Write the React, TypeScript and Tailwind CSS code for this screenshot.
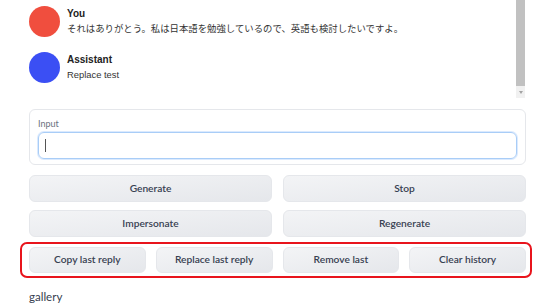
import React from 'react'

const messages = [
  { name: 'You', text: 'それはありがとう。私は日本語を勉強しているので、英語も検討したいですよ。', color: 'bg-[#f04e3e]' },
  { name: 'Assistant', text: 'Replace test', color: 'bg-[#3b4ff4]' },
]

function Btn({ label, small }: { label: string; small?: boolean }) {
  return (
    <button
      className={`flex-1 ${small ? 'h-[26px]' : 'h-[27px]'} rounded-[6px] border border-[#e5e7eb] bg-gradient-to-br from-[#f3f4f6] to-[#e5e7eb] text-[10.2px] font-semibold text-[#374151] [font-family:Lato,'Noto_Sans',sans-serif]`}
    >
      {label}
    </button>
  )
}

export default function App() {
  return (
    <div className="w-[560px] h-[306px] bg-white overflow-hidden pl-[29px] pr-[34px]">
      {/* chat log */}
      <div className="relative h-[100px]">
        <div className="flex flex-col gap-[15px] pt-[6px] pr-[14px]">
          {messages.map((m) => (
            <div key={m.name} className="flex gap-[7px] h-[31px]">
              <span className={`h-[31px] w-[31px] shrink-0 rounded-full ${m.color}`} />
              <div className="flex flex-col [font-family:'Liberation_Sans','Noto_Sans_CJK_JP',sans-serif] text-[#333]">
                <span className="text-[10px] font-bold leading-[14px] mt-[1px] text-[#222]">{m.name}</span>
                <span className="text-[9.4px] leading-[16px]">{m.text}</span>
              </div>
            </div>
          ))}
        </div>
        <div className="absolute right-[1px] top-0 h-[98px] w-[9px] bg-[#f1f1f1] flex flex-col">
          <div className="h-[86px] bg-[#c1c1c1]" />
          <div className="flex-1 flex items-center justify-center">
            <span className="block w-0 h-0 border-l-[2.5px] border-r-[2.5px] border-t-[3px] border-l-transparent border-r-transparent border-t-[#a3a3a3]" />
          </div>
        </div>
      </div>

      {/* input */}
      <div className="mt-[9px] rounded-[6px] border border-[#e5e7eb] px-[8px] pt-[8px] pb-[5px]">
        <div className="text-[9px] text-[#6b7280] leading-[12px] [font-family:Lato,'Noto_Sans',sans-serif]">Input</div>
        <div className="mt-[2px] h-[27px] rounded-[6px] border border-[#a9cdf7] shadow-[0_0_0_1px_#dbeafe] flex items-center pl-[6px]">
          <span className="w-px h-[13px] bg-[#555]" />
        </div>
      </div>

      <div className="mt-[10px] flex gap-[11px]">
        <Btn label="Generate" />
        <Btn label="Stop" />
      </div>
      <div className="mt-[8px] flex gap-[11px]">
        <Btn label="Impersonate" />
        <Btn label="Regenerate" />
      </div>

      <div className="mt-[5px] -ml-[9px] -mr-[6px] rounded-[7px] border-2 border-[#e8141c] pl-[7px] pr-[4px] py-[3px] flex gap-[10px]">
        <Btn small label="Copy last reply" />
        <Btn small label="Replace last reply" />
        <Btn small label="Remove last" />
        <Btn small label="Clear history" />
      </div>

      <div className="mt-[11px] text-[11.5px] leading-[16px] text-[#374151] [font-family:Lato,'Noto_Sans',sans-serif]">gallery</div>
    </div>
  )
}
